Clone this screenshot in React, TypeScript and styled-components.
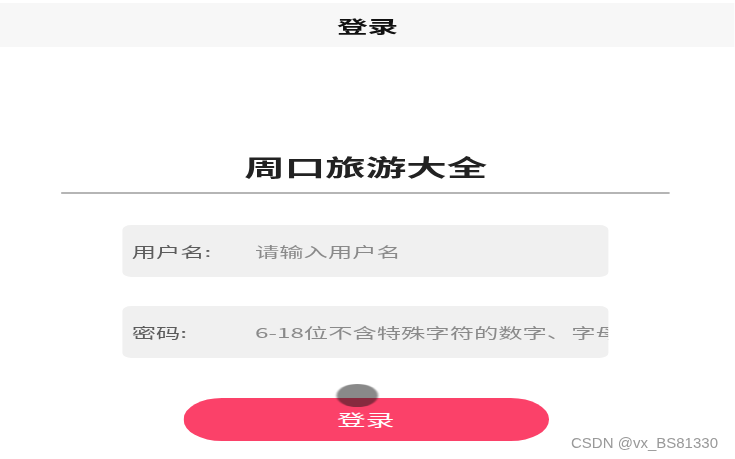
import React from "react";
import styled, { createGlobalStyle } from "styled-components";

const GlobalStyle = createGlobalStyle`
  html, body {
    margin: 0;
    padding: 0;
    width: 735px;
    height: 459px;
    overflow: hidden;
    background: #ffffff;
  }
  body {
    font-family: "Noto Sans CJK SC", "Noto Sans", sans-serif;
  }
  * { box-sizing: border-box; }
`;

const Page = styled.div`
  position: relative;
  width: 735px;
  height: 459px;
  overflow: hidden;
`;

/* The reference is a phone page stretched horizontally; the stage reproduces that stretch. */
const Stage = styled.div`
  width: 408.33px;
  transform: scaleX(1.8);
  transform-origin: 0 0;
  display: flex;
  flex-direction: column;
  align-items: center;
`;

const Header = styled.header`
  align-self: stretch;
  margin-top: 3px;
  height: 44px;
  background: #f7f7f7;
  display: flex;
  align-items: center;
  justify-content: center;
  font-size: 17px;
  line-height: 1;
  font-weight: 700;
  color: #111;
`;

const Body = styled.main`
  align-self: stretch;
  display: flex;
  flex-direction: column;
  align-items: center;
  padding-right: 2px;
`;

const Title = styled.h1`
  margin: 104px 0 0;
  font-size: 22.5px;
  line-height: 30px;
  font-weight: 700;
  color: #222;
`;

const Divider = styled.hr`
  margin: 11px 0 0;
  width: 338px;
  height: 2px;
  border: 0;
  background: #b5b5b5;
`;

const Form = styled.form`
  margin-top: 31px;
  display: flex;
  flex-direction: column;
  align-items: center;
  gap: 29px;
`;

const Field = styled.label`
  width: 270px;
  height: 52px;
  border-radius: 5px;
  background: #f0f0f0;
  display: flex;
  align-items: center;
  padding-left: 5px;
  overflow: hidden;
  white-space: nowrap;
`;

const FieldLabel = styled.span`
  flex: 0 0 68.5px;
  font-size: 13.5px;
  line-height: 20px;
  color: #5c5c5c;
`;

const Input = styled.input`
  flex: 1;
  min-width: 0;
  border: 0;
  outline: none;
  padding: 0;
  background: transparent;
  font-family: inherit;
  font-size: 13.5px;
  line-height: 20px;
  color: #333;
  &::placeholder {
    color: #8a8a8a;
    opacity: 1;
  }
`;

const SubmitButton = styled.button`
  position: relative;
  margin-top: 40px;
  width: 203.3px;
  height: 42.5px;
  border: 0;
  border-radius: 21.25px;
  background: #fb4169;
  color: #ffffff;
  font-family: inherit;
  font-size: 16px;
  line-height: 1;
  padding: 0;
`;

const TouchDot = styled.span`
  position: absolute;
  left: 85.5px;
  top: -14.5px;
  width: 23.3px;
  height: 23px;
  border-radius: 50%;
  background: rgba(20, 20, 20, 0.5);
  filter: blur(0.7px);
  pointer-events: none;
`;

const Watermark = styled.div`
  position: absolute;
  right: 17px;
  top: 435px;
  font-family: "Liberation Sans", Arial, sans-serif;
  font-size: 15px;
  line-height: 15px;
  color: #999;
`;

export default function App() {
  return (
    <Page>
      <GlobalStyle />
      <Stage>
        <Header>登录</Header>
        <Body>
          <Title>周口旅游大全</Title>
          <Divider />
          <Form onSubmit={(e) => e.preventDefault()}>
            <Field>
              <FieldLabel>用户名:</FieldLabel>
              <Input type="text" placeholder="请输入用户名" />
            </Field>
            <Field>
              <FieldLabel>密码:</FieldLabel>
              <Input type="password" placeholder="6-18位不含特殊字符的数字、字母组合" />
            </Field>
          </Form>
          <SubmitButton type="button">
            <TouchDot />
            登录
          </SubmitButton>
        </Body>
      </Stage>
      <Watermark>CSDN @vx_BS81330</Watermark>
    </Page>
  );
}
